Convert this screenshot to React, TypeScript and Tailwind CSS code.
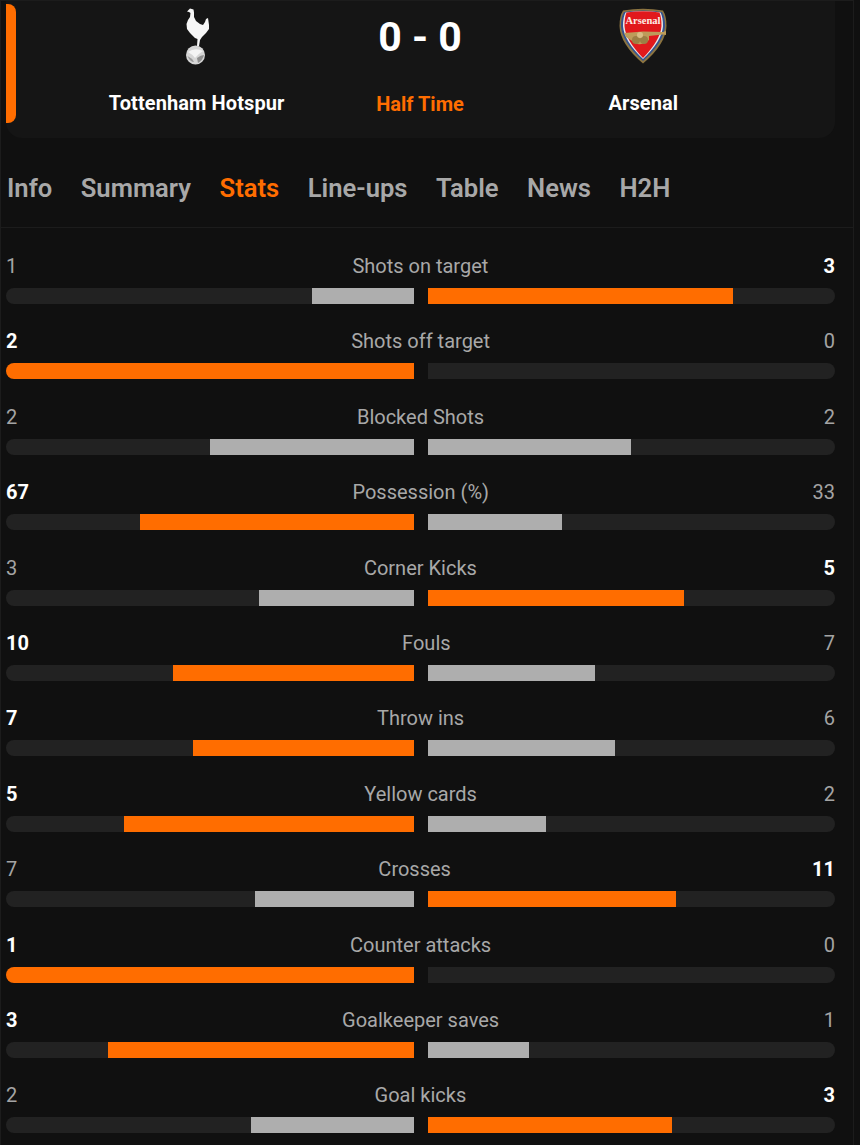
import React from 'react'

type Stat = { label: string; home: number; away: number; homePct: number; awayPct: number }

const stats: Stat[] = [
  { label: 'Shots on target', home: 1, away: 3, homePct: 25, awayPct: 75 },
  { label: 'Shots off target', home: 2, away: 0, homePct: 100, awayPct: 0 },
  { label: 'Blocked Shots', home: 2, away: 2, homePct: 50, awayPct: 50 },
  { label: 'Possession (%)', home: 67, away: 33, homePct: 67, awayPct: 33 },
  { label: 'Corner Kicks', home: 3, away: 5, homePct: 38, awayPct: 63 },
  { label: 'Fouls', home: 10, away: 7, homePct: 59, awayPct: 41 },
  { label: 'Throw ins', home: 7, away: 6, homePct: 54, awayPct: 46 },
  { label: 'Yellow cards', home: 5, away: 2, homePct: 71, awayPct: 29 },
  { label: 'Crosses', home: 7, away: 11, homePct: 39, awayPct: 61 },
  { label: 'Counter attacks', home: 1, away: 0, homePct: 100, awayPct: 0 },
  { label: 'Goalkeeper saves', home: 3, away: 1, homePct: 75, awayPct: 25 },
  { label: 'Goal kicks', home: 2, away: 3, homePct: 40, awayPct: 60 },
]

const tabs = ['Info', 'Summary', 'Stats', 'Line-ups', 'Table', 'News', 'H2H']

const SpursCrest = () => (
  <svg width="26" height="57" viewBox="0 0 26 57">
    <path
      fill="#f6f6f6"
      d="M3 3.500 L6 0.500 L9.500 1.500 L10 4.500 L10 9 L12 13 L16 16 L19 17 L21 14 L22 11 L24 10 L25 17 L25 21 L22 25 L18 29 L16 32 L15 38 L13 38 L13.500 31 L11 30 L6 25 L3 21 L2.500 16 L4 12 L6 9 L6.500 5 L5 4 Z"
    />
    <circle cx="11.500" cy="47" r="9.500" fill="#d6d6d6" />
    <path d="M4 44 Q11 39 19 43 Q14 46 11 50 Q8 46 4 44 Z" fill="#f4f4f4" />
    <path d="M3.500 48 Q8 50 10 54 Q6 54 3.500 48 Z" fill="#9a9a9a" />
    <path d="M13 50 Q17 47 20 47 Q19 52 14 55 Z" fill="#8f8f8f" />
  </svg>
)

const ArsenalCrest = () => (
  <svg width="49" height="56" viewBox="0 0 49 56">
    <path fill="#8c7440" d="M4 2.500 Q24 -1 44 2.500 Q47.500 8 47.500 18 Q47 36 24 55.500 Q1 36 0.500 18 Q0.500 8 4 2.500 Z" />
    <path fill="#33528f" d="M5 4 Q24 1 43 4 Q46 9 46 18 Q45 34 24 53 Q3 34 2 18 Q2 9 5 4 Z" />
    <path fill="#e9e9e9" d="M6.500 4.500 Q24 1.500 41.500 4.500 Q44 9 44 18 Q43 33 24 51 Q5 33 4 18 Q4 9 6.500 4.500 Z" />
    <path fill="#e1191c" d="M7.500 4.500 Q24 2 40.500 4.500 Q42.500 9 42.500 18 Q41.500 32 24 50 Q6.500 32 5.500 18 Q5.500 9 7.500 4.500 Z" />
    <text
      x="24"
      y="16"
      textAnchor="middle"
      fontFamily="'Liberation Serif', serif"
      fontWeight="700"
      fontSize="10.500"
      fill="#fdeee8"
    >
      Arsenal
    </text>
    <path fill="#bd9c5a" d="M5 25 L24 23.500 L44 24 L47 23 L47 27 L44 26.500 L30 28 L30 32 Q25 37 18 36 L10 31 L7 29 Z" />
    <circle cx="17" cy="32" r="4" fill="#9c7f45" />
    <circle cx="25" cy="32" r="4" fill="#9c7f45" />
    <circle cx="21" cy="27" r="3" fill="#d8bd85" />
  </svg>
)

const Bar = ({ pct, lead, side }: { pct: number; lead: boolean; side: 'home' | 'away' }) => (
  <div
    className={`flex h-4 flex-1 overflow-hidden bg-[#222222] ${
      side === 'home' ? 'justify-end rounded-l-lg' : 'justify-start rounded-r-lg'
    }`}
  >
    <div className={lead ? 'bg-[#ff6d00]' : 'bg-[#aeaeae]'} style={{ width: `${pct}%` }} />
  </div>
)

const StatRow = ({ stat }: { stat: Stat }) => (
  <div className="h-[75.4px]">
    <div className="flex h-[28px] items-center justify-between text-[20px] leading-[28px]">
      <span className={stat.home > stat.away ? 'font-bold text-white' : 'text-[#a4a4a4]'}>{stat.home}</span>
      <span className="text-[#a8a8a8]">{stat.label}</span>
      <span className={stat.away > stat.home ? 'font-bold text-white' : 'text-[#a4a4a4]'}>{stat.away}</span>
    </div>
    <div className="mt-[8px] flex gap-[14px]">
      <Bar pct={stat.homePct} lead={stat.home > stat.away} side="home" />
      <Bar pct={stat.awayPct} lead={stat.away > stat.home} side="away" />
    </div>
  </div>
)

export default function App() {
  return (
    <div className="h-[1145px] w-[860px] overflow-hidden bg-[#101010] font-['Roboto',sans-serif]">
      <div className="h-full w-[854px] border-t border-r border-l border-[#1c1c1c]">
        <div className="ml-[5px] flex h-[137px] w-[829px] rounded-b-2xl bg-[#151515]">
          <div className="mt-[3px] h-[119px] w-[10px] rounded-r-lg bg-[#ff6d00]" />
          <div className="ml-[69px] grid w-[670px] grid-cols-3 text-center">
            <div className="flex flex-col items-center">
              <div className="mt-[7px] h-[57px]">
                <SpursCrest />
              </div>
              <p className="mt-[23px] whitespace-nowrap text-[20px] leading-[30px] font-bold tracking-[0.1px] text-white">
                Tottenham Hotspur
              </p>
            </div>
            <div className="flex flex-col items-center">
              <p className="mt-[12px] text-[41px] leading-[48px] font-bold text-white">0 - 0</p>
              <p className="mt-[28px] text-[20px] leading-[30px] font-bold text-[#ff6d00]">Half Time</p>
            </div>
            <div className="flex flex-col items-center">
              <div className="mt-[7px] h-[57px]">
                <ArsenalCrest />
              </div>
              <p className="mt-[23px] text-[20px] leading-[30px] font-bold tracking-[0.1px] text-white">Arsenal</p>
            </div>
          </div>
        </div>

        <div className="flex h-[90px] items-center gap-[28.5px] border-b border-[#1c1c1c] pt-[12px] pl-[6px] text-[25.6px] font-semibold text-[#a8a8a8]">
          {tabs.map(tab => (
            <span key={tab} className={tab === 'Stats' ? 'text-[#ff6d00]' : ''}>
              {tab}
            </span>
          ))}
        </div>

        <div className="ml-[5px] w-[829px] pt-[24px]">
          {stats.map(stat => (
            <StatRow key={stat.label} stat={stat} />
          ))}
        </div>
      </div>
    </div>
  )
}
